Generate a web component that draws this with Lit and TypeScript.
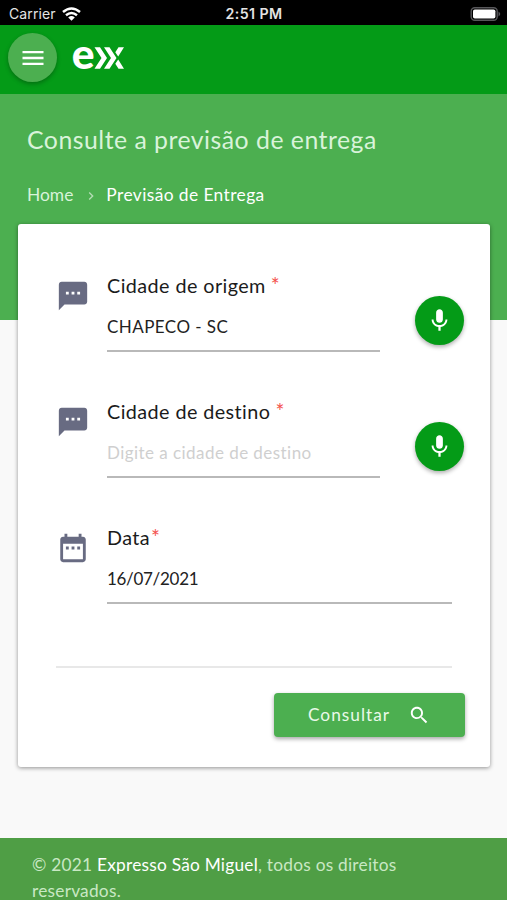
import { LitElement, html, css, svg } from "lit";
import { customElement, property } from "lit/decorators.js";

const icons = {
  menu: "M3 18h18v-2H3v2zm0-5h18v-2H3v2zm0-7v2h18V6H3z",
  sms: "M20 2H4c-1.1 0-1.99.9-1.99 2L2 22l4-4h14c1.1 0 2-.9 2-2V4c0-1.1-.9-2-2-2zM9 11H7V9h2v2zm4 0h-2V9h2v2zm4 0h-2V9h2v2z",
  date: "M9 11H7v2h2v-2zm4 0h-2v2h2v-2zm4 0h-2v2h2v-2zm2-7h-1V2h-2v2H8V2H6v2H5c-1.11 0-1.99.9-1.99 2L3 20c0 1.1.89 2 2 2h14c1.1 0 2-.9 2-2V6c0-1.1-.9-2-2-2zm0 16H5V9h14v11z",
  mic: "M12 14c1.66 0 2.99-1.34 2.99-3L15 5c0-1.66-1.34-3-3-3S9 3.34 9 5v6c0 1.66 1.34 3 3 3zm5.3-3c0 3-2.54 5.1-5.3 5.1S6.7 14 6.7 11H5c0 3.41 2.72 6.23 6 6.72V21h2v-3.28c3.28-.48 6-3.3 6-6.72h-1.7z",
  search: "M15.5 14h-.79l-.28-.27C15.41 12.59 16 11.11 16 9.5 16 5.91 13.09 3 9.5 3S3 5.91 3 9.5 5.91 16 9.5 16c1.61 0 3.09-.59 4.23-1.57l.27.28v.79l5 4.99L20.49 19l-4.99-5zm-6 0C7.01 14 5 11.99 5 9.5S7.01 5 9.5 5 14 7.01 14 9.5 11.99 14 9.5 14z",
  chevron: "M10 6L8.59 7.41 13.17 12l-4.58 4.59L10 18l6-6z",
};
type IconName = keyof typeof icons;

@customElement("md-icon")
class MdIcon extends LitElement {
  @property() name: IconName = "menu";
  static styles = css`
    :host { display: block; flex: none; }
    svg { display: block; width: 100%; height: 100%; fill: currentColor; }
  `;
  render() {
    return html`<svg viewBox="0 0 24 24">${svg`<path d=${icons[this.name]}></path>`}</svg>`;
  }
}

@customElement("status-bar")
class StatusBar extends LitElement {
  static styles = css`
    :host {
      display: grid; grid-template-columns: 1fr auto 1fr; align-items: center; flex: none;
      height: 25px; box-sizing: border-box; padding: 2px 6px 0 9px;
      background: #000; color: #e4e4e4;
      font: 14px/20px Inter, "Liberation Sans", sans-serif;
    }
    .left { display: flex; align-items: center; gap: 6px; letter-spacing: 0.1px; }
    .time { font-weight: 600; font-size: 14.2px; letter-spacing: 0.4px; margin-right: 2px; }
    .wifi { width: 19px; height: 14px; }
    .battery { justify-self: end; width: 31px; height: 14px; }
  `;
  render() {
    return html`
      <div class="left"><span>Carrier</span>
        <svg class="wifi" viewBox="0 0 19 14" fill="none" stroke="#fff" stroke-width="2.5">
          <path d="M1 5Q9.500-2 18 5M4 8.300Q9.500 3.800 15 8.300"></path>
          <path d="M6.200 10.400Q9.500 7.800 12.800 10.400L9.500 13.800Z" fill="#fff" stroke="none"></path>
        </svg>
      </div>
      <span class="time">2:51 PM</span>
      <svg class="battery" viewBox="0 0 31 14">
        <rect x="1.200" y=".700" width="26" height="12.600" rx="3.500" fill="none" stroke="#57575a" stroke-width="1.400"></rect>
        <rect x="3" y="2.400" width="22.400" height="9.200" rx="1.800" fill="#fff"></rect>
        <path d="M28.500 4.500Q32 7 28.500 9.500Z" fill="#57575a"></path>
      </svg>`;
  }
}

@customElement("form-field")
class FormField extends LitElement {
  @property() icon: IconName = "sms";
  @property() label = "";
  @property() value = "";
  @property() placeholder = "";
  @property({ type: Boolean }) voice = false;
  @property({ type: Boolean }) tight = false;
  static styles = css`
    :host { display: flex; height: 126px; align-items: flex-start; }
    .icon { width: 34px; height: 34px; margin: 6px 17px 0 0; color: #686b82; }
    .body { flex: 1; min-width: 0; display: flex; flex-direction: column; }
    label { font-size: 19.8px; line-height: 26px; margin-top: -1px; color: #1b1b1b; letter-spacing: 0.42px; white-space: nowrap; }
    .star { color: #f4534e; margin-left: 5px; font-size: 21px; line-height: 20px; }
    .tight { margin-left: 1px; }
    input {
      font: inherit; font-size: 17px; line-height: 24px; height: 46px; box-sizing: border-box; width: 100%; margin: 8px 0 0;
      padding: 0 0 4px; border: 0; border-bottom: 2px solid #b9b9b9; border-radius: 0;
      background: none; color: #222; outline: 0; letter-spacing: 0.45px;
    }
    .date { letter-spacing: -0.3px; }
    input::placeholder { color: #cfcfcf; opacity: 1; }
    .mic {
      flex: none; width: 49px; height: 49px; margin: 23px -11.5px 0 34.5px; padding: 0;
      display: grid; place-items: center; border: 0; border-radius: 50%;
      background: #049b17; color: #fff; box-shadow: 0 2px 4px rgba(0, 0, 0, 0.32);
    }
    .mic md-icon { width: 27px; height: 27px; }
  `;
  render() {
    return html`
      <md-icon class="icon" name=${this.icon}></md-icon>
      <div class="body">
        <label>${this.label}<span class="star ${this.tight ? "tight" : ""}">*</span></label>
        <input class=${this.icon} .value=${this.value} placeholder=${this.placeholder}>
      </div>
      ${this.voice ? html`<button class="mic"><md-icon name="mic"></md-icon></button>` : ""}`;
  }
}

@customElement("app-root")
class AppRoot extends LitElement {
  static styles = css`
    :host {
      display: flex; flex-direction: column; width: 100%; height: 900px; overflow: hidden;
      background: #f9f9f9; font-family: Lato, "Noto Sans", sans-serif;
    }
    .topbar {
      flex: none; height: 69px; box-sizing: border-box; padding: 8px 8px 0; display: flex; gap: 15px;
      background: #049b17;
    }
    .menu {
      width: 49px; height: 49px; padding: 0; border: 0; border-radius: 50%; display: grid; place-items: center;
      background: #4caf50; color: #fff; box-shadow: 0 2px 4px rgba(0, 0, 0, 0.28);
    }
    .menu md-icon { width: 28px; height: 28px; }
    .logo { width: 54px; height: 60px; margin-top: -6px; }
    .logo text { font: 900 41px/1 Lato, sans-serif; fill: #fff; }
    .logo path { fill: #fff; }
    .hero { flex: none; height: 226px; box-sizing: border-box; padding: 30px 27px 0; background: #4caf50; color: #d9f3da; }
    h1 { margin: 0; font-weight: 400; font-size: 24.8px; line-height: 32px; letter-spacing: 0.5px; white-space: nowrap; }
    nav { display: flex; align-items: center; margin-top: 27px; font-size: 17.4px; line-height: 24px; white-space: nowrap; }
    nav md-icon { width: 16px; height: 16px; margin: 2px 7px 0 10px; color: #b5deb6; }
    .current { color: #fff; letter-spacing: 0.4px; }
    .card {
      flex: none; height: 543px; box-sizing: border-box; margin: -96px 17px 0 18px; padding: 49px 38px 0;
      background: #fff; border-radius: 3px; box-shadow: 0 1px 4px rgba(0, 0, 0, 0.42);
    }
    hr { margin: 15px 0 0; border: 0; height: 2px; background: #e8e8e8; }
    .actions { display: flex; justify-content: flex-end; margin: 25px -13px 0 0; }
    .submit {
      width: 191px; height: 44px; padding: 0 35px 0 34px; border: 0; border-radius: 4px;
      display: flex; align-items: center; justify-content: space-between;
      background: #4caf50; color: #e9f9e9; font: 17.3px/24px Lato, sans-serif; letter-spacing: 1px;
      box-shadow: 0 2px 4px rgba(0, 0, 0, 0.35);
    }
    .submit md-icon { width: 22.5px; height: 22.5px; color: #fff; }
    footer {
      flex: 1; margin-top: 71px; box-sizing: border-box; padding: 14px 32px 0; background: #4f9e45; color: #c9e8c4;
      font-size: 17.3px; line-height: 26px; letter-spacing: 0.24px; white-space: nowrap;
    }
    footer a { color: #fff; }
  `;
  render() {
    return html`
      <status-bar></status-bar>
      <header class="topbar">
        <button class="menu"><md-icon name="menu"></md-icon></button>
        <svg class="logo" viewBox="0 -16 54 60">
          <text x="-.200" y="25.500" textLength="22.800" lengthAdjust="spacingAndGlyphs">e</text>
          <path d="M22.500 4.200H28L35 15 28 25.800H22.500L29.500 15ZM32 4.200H37.500L44.500 15 37.500 25.800H32L39 15ZM46.500 4.200H52L46.200 13.400 43.300 9.200ZM46.200 16.600L52 25.800H46.500L43.300 20.800Z"></path>
        </svg>
      </header>
      <section class="hero">
        <h1>Consulte a previsão de entrega</h1>
        <nav><span>Home</span><md-icon name="chevron"></md-icon><span class="current">Previsão de Entrega</span></nav>
      </section>
      <main class="card">
        <form-field icon="sms" label="Cidade de origem" value="CHAPECO - SC" voice></form-field>
        <form-field icon="sms" label="Cidade de destino" placeholder="Digite a cidade de destino" voice></form-field>
        <form-field icon="date" label="Data" value="16/07/2021" tight></form-field>
        <hr>
        <div class="actions"><button class="submit"><span>Consultar</span><md-icon name="search"></md-icon></button></div>
      </main>
      <footer>© 2021 <a>Expresso São Miguel</a>, todos os direitos<br>reservados.</footer>`;
  }
}
